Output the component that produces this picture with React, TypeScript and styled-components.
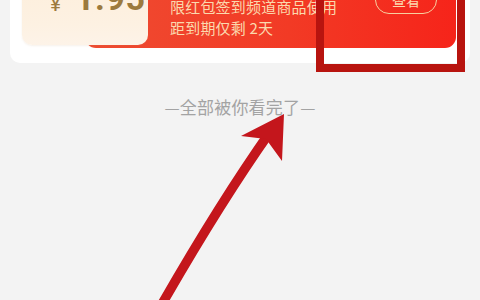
import React from "react";
import styled, { createGlobalStyle } from "styled-components";

const Global = createGlobalStyle`
  html, body {
    margin: 0;
    padding: 0;
    background: #f3f3f3;
  }
  body {
    width: 480px;
    height: 300px;
    overflow: hidden;
    font-family: "Noto Sans CJK SC", "Noto Sans", sans-serif;
  }
`;

const Page = styled.div`
  position: relative;
  width: 480px;
  height: 300px;
  overflow: hidden;
  background: #f3f3f3;
  display: flex;
  flex-direction: column;
`;

const Card = styled.div`
  margin: -24px 10px 0 10px;
  background: #ffffff;
  border-radius: 0 0 10px 10px;
  padding: 0 14px 15px 12px;
`;

const Coupon = styled.div`
  display: flex;
  align-items: flex-start;
`;

const Stub = styled.div`
  position: relative;
  z-index: 1;
  width: 126px;
  height: 69px;
  flex: none;
  border-radius: 10px;
  background: linear-gradient(180deg, #fdeedb 0%, #fdf1e2 70%, #fdf3e8 100%);
  box-shadow: 0 1px 2px rgba(180, 140, 90, 0.12);
  display: flex;
  align-items: flex-end;
  padding: 0 0 33px 28px;
  box-sizing: border-box;
  color: #9c7a3e;
  font-family: "Roboto", "Noto Sans", sans-serif;
`;

const Currency = styled.span`
  font-size: 21px;
  line-height: 1;
  margin-right: 14px;
  margin-bottom: -3px;
`;

const Amount = styled.span`
  font-size: 34px;
  font-weight: 700;
  line-height: 0.76;
  letter-spacing: 0.5px;
`;

const Body = styled.div`
  flex: 1;
  height: 72px;
  margin-left: -63px;
  padding: 20px 0 0 85px;
  box-sizing: border-box;
  border-radius: 0 0 11px 11px;
  background: linear-gradient(90deg, #ef4c32 0%, #f23a25 55%, #f6241a 100%);
  display: flex;
  align-items: flex-start;
  justify-content: space-between;
`;

const Info = styled.div`
  display: flex;
  flex-direction: column;
`;

const InfoLine = styled.div`
  color: #fbd9ae;
  font-size: 15px;
  line-height: 21px;
  white-space: nowrap;
  letter-spacing: 0.2px;
`;

const ViewButton = styled.div`
  margin: -10px 19px 0 0;
  width: 62px;
  height: 28px;
  box-sizing: border-box;
  border: 1px solid #f7cf9f;
  border-radius: 14px;
  color: #fbd9ae;
  font-size: 14px;
  line-height: 26px;
  text-align: center;
`;

const EndNote = styled.div`
  margin-top: 32px;
  text-align: center;
  color: #a3a3a3;
  font-size: 17px;
  line-height: 24px;
  letter-spacing: 0.2px;
`;

const Annotation = styled.svg`
  position: absolute;
  left: 0;
  top: 0;
  width: 480px;
  height: 300px;
  pointer-events: none;
`;

export default function App() {
  return (
    <>
      <Global />
      <Page>
        <Card>
          <Coupon>
            <Stub>
              <Currency>¥</Currency>
              <Amount>1.95</Amount>
            </Stub>
            <Body>
              <Info>
                <InfoLine>限红包签到频道商品使用</InfoLine>
                <InfoLine>距到期仅剩 2天</InfoLine>
              </Info>
              <ViewButton>查看</ViewButton>
            </Body>
          </Coupon>
        </Card>
        <EndNote>—全部被你看完了—</EndNote>
        <Annotation viewBox="0 0 480 300">
          <rect x="320" y="-20" width="141" height="88" fill="none" stroke="#b8140f" strokeWidth="8" />
          <path d="M162 304 Q220 203 270 132" fill="none" stroke="#c4161c" strokeWidth="9.5" />
          <polygon points="284,114 241,136 266,139 282,161" fill="#c4161c" />
        </Annotation>
      </Page>
    </>
  );
}
